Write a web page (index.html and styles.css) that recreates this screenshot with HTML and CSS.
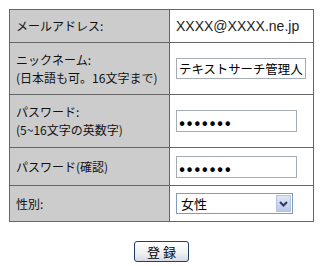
FILE: index.html
```html
<!DOCTYPE html>
<html lang="ja">
<head>
    <meta charset="UTF-8">
    <title>会員登録</title>
    <link rel="stylesheet" href="styles.css">
</head>
<body>
    <form class="signup">
        <table class="form-table">
            <tr class="row-mail">
                <th>メールアドレス:</th>
                <td class="mail">XXXX@XXXX.ne.jp</td>
            </tr>
            <tr class="row-nick">
                <th>ニックネーム:<br>(日本語も可。16文字まで)</th>
                <td><input type="text" class="text-box" value="テキストサーチ管理人"></td>
            </tr>
            <tr class="row-pass">
                <th>パスワード:<br>(5~16文字の英数字)</th>
                <td><input type="password" class="pass-box" value="1234567"></td>
            </tr>
            <tr class="row-confirm">
                <th>パスワード(確認)</th>
                <td><input type="password" class="pass-box" value="1234567"></td>
            </tr>
            <tr class="row-sex">
                <th>性別:</th>
                <td>
                    <div class="select-wrap">
                        <select class="sex">
                            <option>男性</option>
                            <option selected>女性</option>
                        </select>
                        <span class="select-arrow">
                            <svg width="9" height="6" viewBox="0 0 9 6"><path d="M1 1 L4.5 4.5 L8 1" fill="none" stroke="#2b3a66" stroke-width="2"/></svg>
                        </span>
                    </div>
                </td>
            </tr>
        </table>
        <div class="actions">
            <button type="button" class="submit">登 録</button>
        </div>
    </form>
</body>
</html>
```

FILE: styles.css
```css
body {
    margin: 0;
    padding: 9px 0 0 9px;
    background-color: #fff;
    font-family: "Noto Sans CJK JP", "Liberation Sans", sans-serif;
    font-size: 12px;
    color: #111;
}
.signup {
    width: 305px;
}
.form-table {
    width: 305px;
    border-collapse: collapse;
}
.form-table th,
.form-table td {
    border: 1px solid #666;
    padding: 0 0 0 6px;
    text-align: left;
    vertical-align: middle;
}
.form-table th {
    width: 153px;
    background-color: #cccccc;
    font-weight: normal;
    line-height: 18px;
}
.form-table td {
    background-color: #fff;
}
.row-mail { height: 33px; }
.row-nick { height: 52px; }
.row-pass { height: 53px; }
.row-confirm { height: 38px; }
.row-sex { height: 36px; }
.mail {
    font-family: "Liberation Sans", sans-serif;
    font-size: 14px;
    color: #222;
}
.text-box,
.pass-box {
    box-sizing: border-box;
    height: 21px;
    margin: 0;
    padding: 0 2px;
    border: 1px solid #a5acb2;
    font-family: "Noto Sans CJK JP", sans-serif;
    font-size: 12.4px;
    color: #000;
}
.text-box {
    width: 130px;
}
.pass-box {
    width: 121px;
    height: 22px;
    font-size: 18px;
    letter-spacing: 1.5px;
}
.select-wrap {
    position: relative;
    width: 117px;
    height: 21px;
}
.sex {
    appearance: none;
    box-sizing: border-box;
    width: 117px;
    height: 21px;
    margin: 0;
    padding: 0 0 0 4px;
    border: 1px solid #7f9db9;
    border-radius: 0;
    background-color: #fff;
    font-family: "Noto Sans CJK JP", sans-serif;
    font-size: 13px;
    color: #000;
}
.select-arrow {
    position: absolute;
    top: 2px;
    right: 2px;
    width: 15px;
    height: 17px;
    display: flex;
    align-items: center;
    justify-content: center;
    background: linear-gradient(#dfe7f7, #b9c8e8);
    border: 1px solid #b4c4e4;
    box-sizing: border-box;
    pointer-events: none;
}
.actions {
    display: flex;
    justify-content: center;
    padding-top: 19px;
}
.submit {
    width: 55px;
    height: 21px;
    padding: 0;
    border: 1px solid #1f3d73;
    border-radius: 3px;
    background: linear-gradient(#ffffff, #f0f0ee 60%, #d6d9e6);
    font-family: "Noto Sans CJK JP", sans-serif;
    font-size: 13px;
    line-height: 19px;
    color: #000;
}
```
